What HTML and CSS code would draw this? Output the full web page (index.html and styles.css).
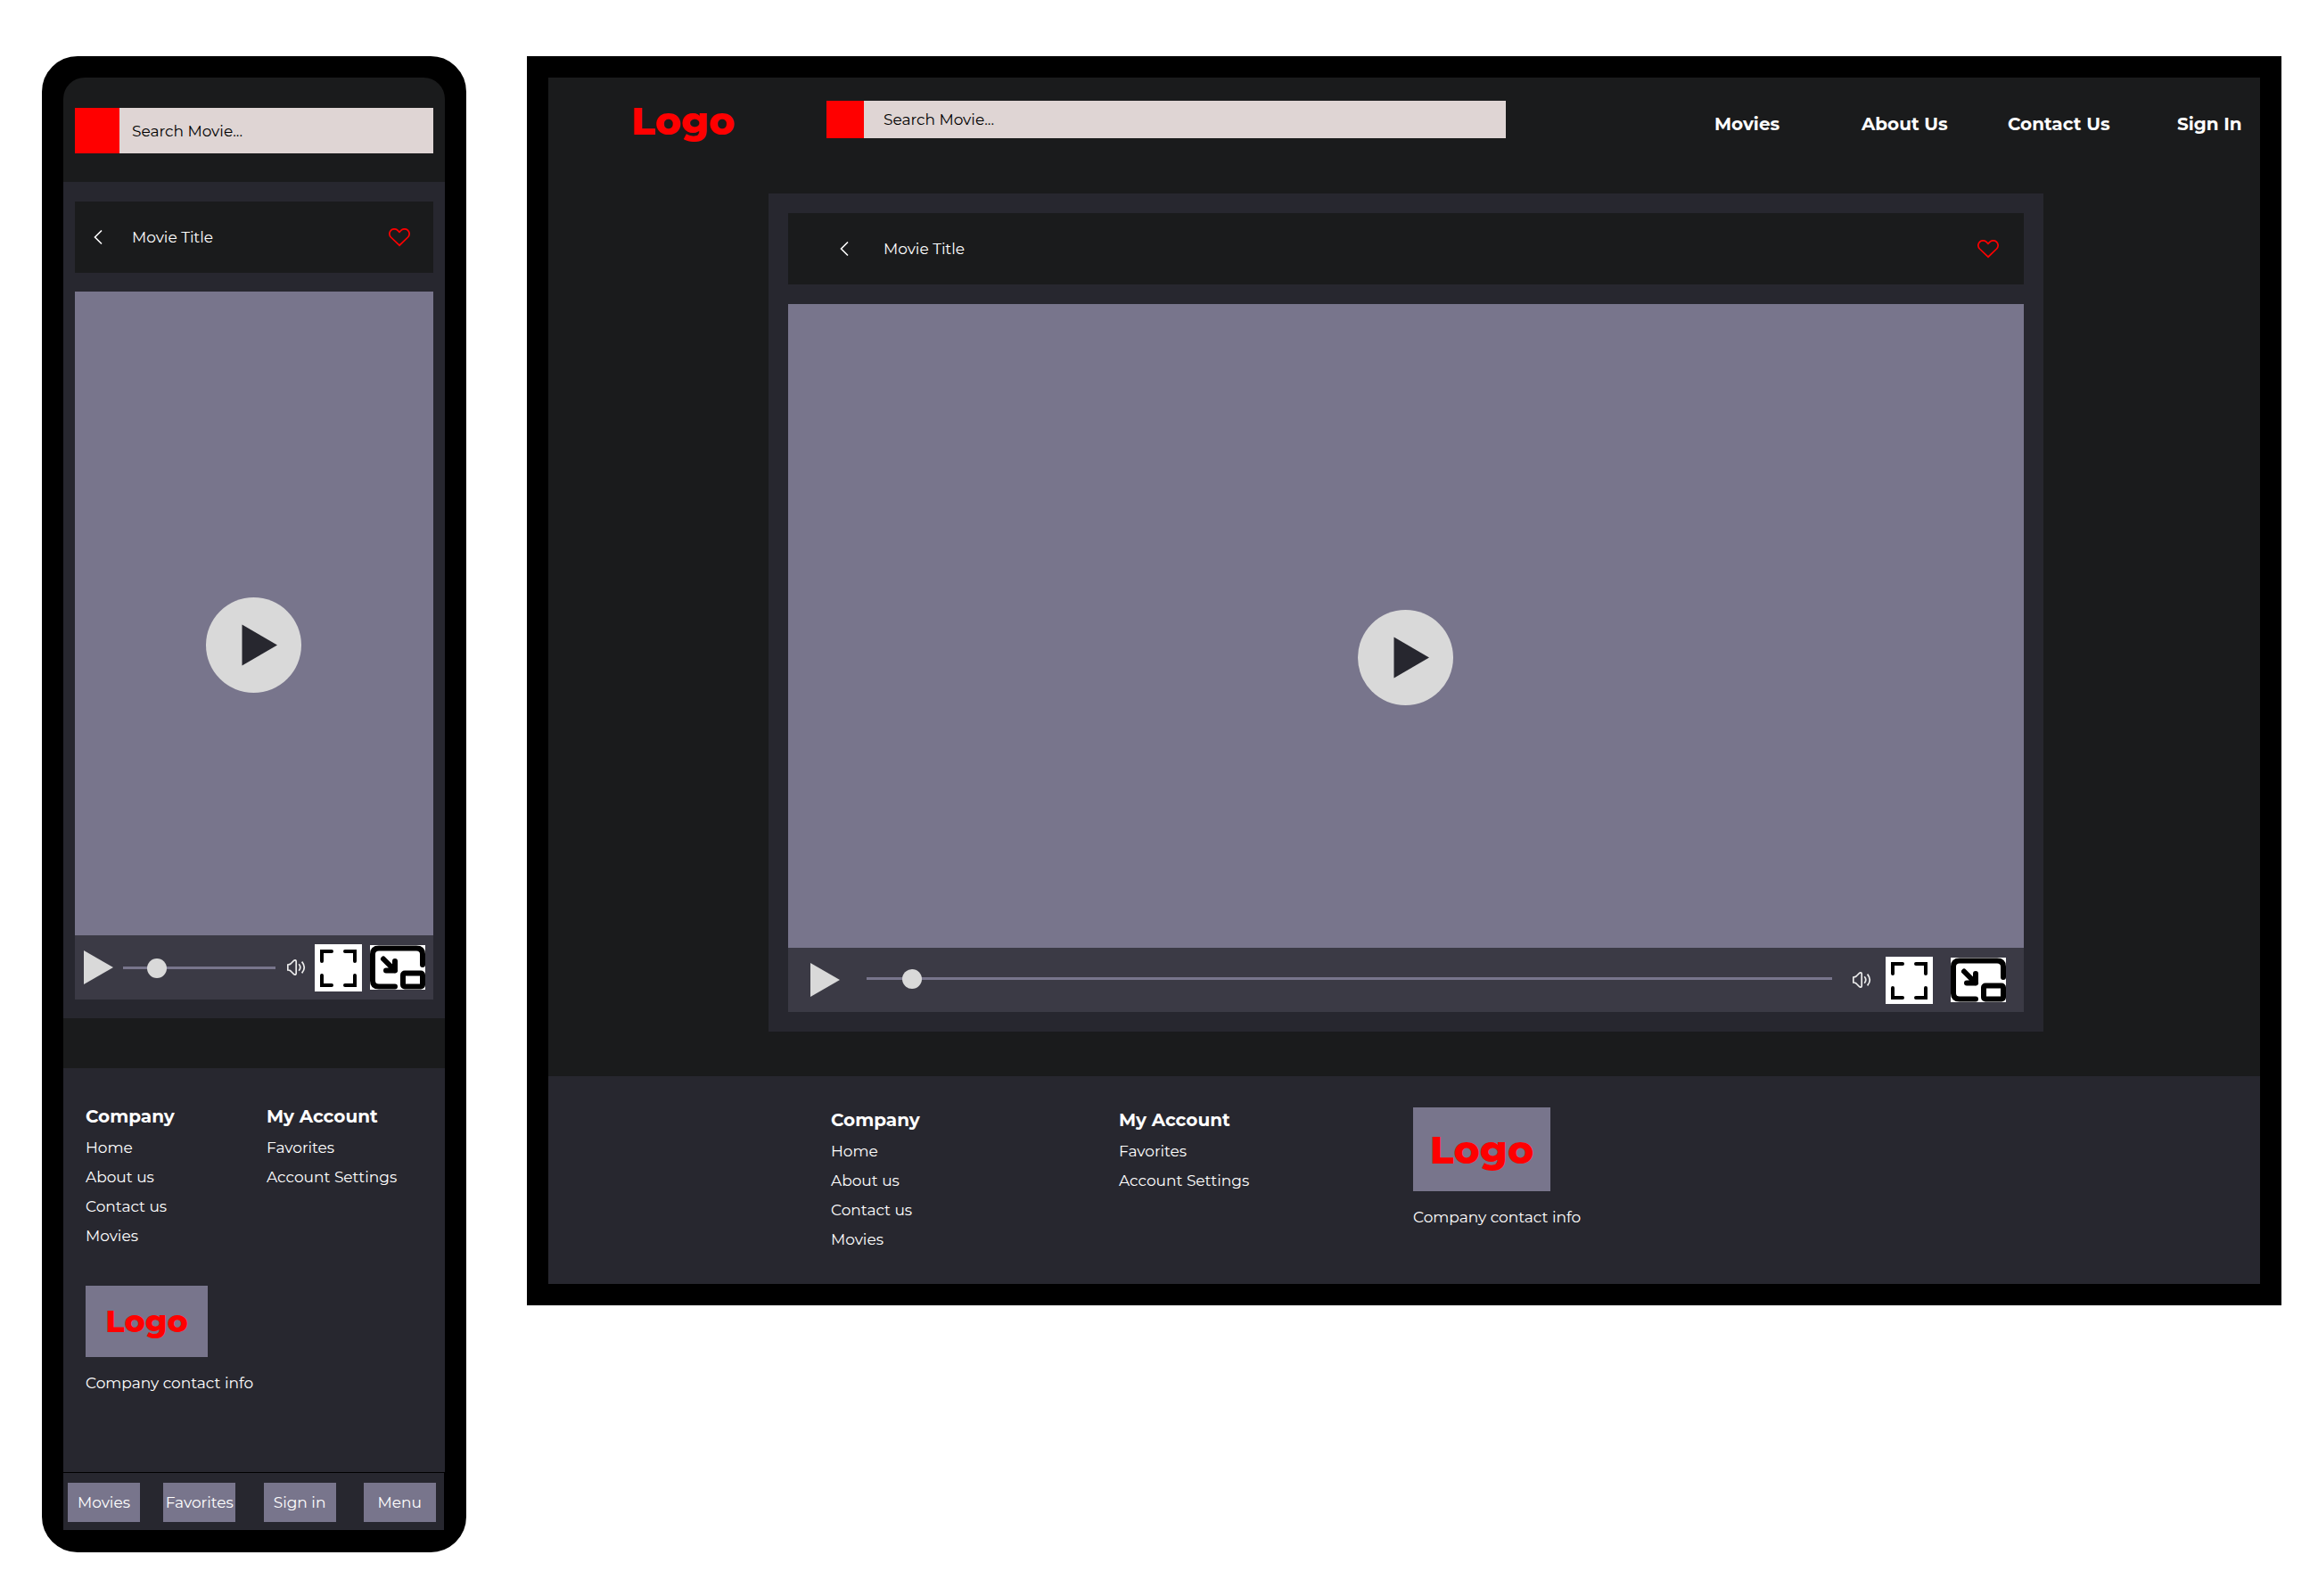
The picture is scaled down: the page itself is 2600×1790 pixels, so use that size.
FILE: index.html
```html
<!DOCTYPE html>
<html lang="en">
<head>
<meta charset="utf-8">
<meta name="viewport" content="width=device-width, initial-scale=1">
<title>Movie player</title>
<link rel="stylesheet" href="styles.css">
</head>
<body>
<svg class="sprite" aria-hidden="true">
  <symbol id="back" viewBox="0 0 10 18"><path d="M9 1.5L1.5 9 9 16.5" fill="none" stroke="currentColor" stroke-width="1.6"/></symbol>
  <symbol id="heart" viewBox="0 0 24 21"><path d="M12 19.2L2.4 10A5.3 5.3 0 0 1 10.1 2.400L12 4.3 13.9 2.400A5.3 5.3 0 0 1 21.6 10Z" fill="none" stroke="currentColor" stroke-width="1.7"/></symbol>
  <symbol id="tri" viewBox="0 0 33 38"><path d="M0 0L33 19 0 38Z" fill="currentColor"/></symbol>
  <symbol id="big-play" viewBox="0 0 107 107"><circle cx="53.5" cy="53.5" r="53.5" fill="#d9d9d9"/><path d="M40.500 30.5L80 53.5 40.500 76.5Z" fill="#27272f"/></symbol>
  <symbol id="volume" viewBox="0 0 21 18"><path d="M.8 6Q3 5.900 4 5L7.800 1.200Q10.200 0 10.200 2.500V15.500Q10.200 18 7.800 16.800L4 13Q3 12.100 .8 12Z M13.200 5.300Q16.400 9 13.200 12.700 M16.600 2.600Q22 9 16.600 15.400" fill="none" stroke="#ececec" stroke-width="1.700"/></symbol>
  <symbol id="full" viewBox="0 0 53 53"><path d="M0 0H53V53H0Z" fill="#fff"/><path d="M8 19V8H19 M34 8H45V19 M45 35V46H34 M19 46H8V35" fill="none" stroke="#000" stroke-width="4" stroke-linecap="round"/></symbol>
  <symbol id="pip" viewBox="0 0 62 50"><path d="M0 0H62V50H0Z" fill="#fff"/><g fill="none" stroke="#000" stroke-width="6" stroke-linecap="round" stroke-linejoin="round"><path d="M59 22V10Q59 3.500 52 3.500H10Q3 3.500 3 10V40Q3 46.500 10 46.500H28"/><rect x="37" y="31.500" width="22" height="15" rx="2"/><path d="M15 15.500L28 28.500M28 18V28.500H18"/></g></symbol>
</svg>

<main class="board">
  <section class="device phone" aria-label="Mobile layout">
    <header class="top">
      <form class="search" role="search">
        <button class="search-go" type="button" aria-label="Search"></button>
        <input class="search-box" type="text" aria-label="Search movie" placeholder="Search Movie...">
      </form>
    </header>
    <section class="player">
      <div class="title-bar">
        <button class="icon-btn back" type="button" aria-label="Back"><svg><use href="#back"/></svg></button>
        <h1 class="title">Movie Title</h1>
        <button class="icon-btn heart" type="button" aria-label="Add to favorites"><svg><use href="#heart"/></svg></button>
      </div>
      <div class="video">
        <button class="icon-btn big-play" type="button" aria-label="Play movie"><svg><use href="#big-play"/></svg></button>
      </div>
      <div class="controls">
        <button class="icon-btn play" type="button" aria-label="Play"><svg><use href="#tri"/></svg></button>
        <input class="seek" type="range" aria-label="Seek" min="0" max="100" value="18">
        <button class="icon-btn volume" type="button" aria-label="Volume"><svg><use href="#volume"/></svg></button>
        <button class="icon-btn full" type="button" aria-label="Full screen"><svg><use href="#full"/></svg></button>
        <button class="icon-btn pip" type="button" aria-label="Picture in picture"><svg><use href="#pip"/></svg></button>
      </div>
    </section>
    <footer class="footer">
      <nav class="links" aria-label="Company">
        <h2>Company</h2>
        <a href="#">Home</a><a href="#">About us</a><a href="#">Contact us</a><a href="#">Movies</a>
      </nav>
      <nav class="links" aria-label="My Account">
        <h2>My Account</h2>
        <a href="#">Favorites</a><a href="#">Account Settings</a>
      </nav>
      <div class="contact">
        <div class="logo-box"><span class="logo">Logo</span></div>
        <p>Company contact info</p>
      </div>
    </footer>
    <nav class="tabs" aria-label="Main">
      <button type="button">Movies</button>
      <button type="button">Favorites</button>
      <button type="button">Sign in</button>
      <button type="button">Menu</button>
    </nav>
  </section>

  <section class="device desktop" aria-label="Desktop layout">
    <header class="top">
      <a class="logo" href="#">Logo</a>
      <form class="search" role="search">
        <button class="search-go" type="button" aria-label="Search"></button>
        <input class="search-box" type="text" aria-label="Search movie" placeholder="Search Movie...">
      </form>
      <nav class="menu" aria-label="Main">
        <a href="#">Movies</a><a href="#">About Us</a><a href="#">Contact Us</a><a href="#">Sign In</a>
      </nav>
    </header>
    <section class="player">
      <div class="title-bar">
        <button class="icon-btn back" type="button" aria-label="Back"><svg><use href="#back"/></svg></button>
        <h1 class="title">Movie Title</h1>
        <button class="icon-btn heart" type="button" aria-label="Add to favorites"><svg><use href="#heart"/></svg></button>
      </div>
      <div class="video">
        <button class="icon-btn big-play" type="button" aria-label="Play movie"><svg><use href="#big-play"/></svg></button>
      </div>
      <div class="controls">
        <button class="icon-btn play" type="button" aria-label="Play"><svg><use href="#tri"/></svg></button>
        <input class="seek" type="range" aria-label="Seek" min="0" max="1000" value="38">
        <button class="icon-btn volume" type="button" aria-label="Volume"><svg><use href="#volume"/></svg></button>
        <button class="icon-btn full" type="button" aria-label="Full screen"><svg><use href="#full"/></svg></button>
        <button class="icon-btn pip" type="button" aria-label="Picture in picture"><svg><use href="#pip"/></svg></button>
      </div>
    </section>
    <footer class="footer">
      <nav class="links" aria-label="Company">
        <h2>Company</h2>
        <a href="#">Home</a><a href="#">About us</a><a href="#">Contact us</a><a href="#">Movies</a>
      </nav>
      <nav class="links" aria-label="My Account">
        <h2>My Account</h2>
        <a href="#">Favorites</a><a href="#">Account Settings</a>
      </nav>
      <div class="contact">
        <div class="logo-box"><span class="logo">Logo</span></div>
        <p>Company contact info</p>
      </div>
    </footer>
  </section>
</main>
</body>
</html>
```
FILE: styles.css
```css
:root {
  --ink: #1a1b1c;
  --panel: #27272f;
  --bar: #3b3a45;
  --mauve: #78758c;
  --light: #d9d9d9;
  --field: #dfd5d4;
  --red: #ff0000;
}

* { box-sizing: border-box; }

body {
  margin: 0;
  background: #fff;
  color: #fff;
  font: 400 17px/33px Montserrat, Inter, sans-serif;
}

h1, h2, p { margin: 0; }
a { color: inherit; text-decoration: none; }
button, input { margin: 0; padding: 0; border: 0; border-radius: 0; font: inherit; color: inherit; }
.sprite { position: absolute; width: 0; height: 0; }

.board {
  display: grid;
  grid-template-columns: minmax(0, 476fr) minmax(0, 1968fr);
  align-items: start;
  gap: 68px;
  padding: 63px 41px 49px 47px;
}

.device { border: 24px solid #000; background: var(--ink); }
.phone { border-radius: 40px; background: #000; }
.phone .top { border-radius: 24px 24px 0 0; }

/* Header */
.top { background: var(--ink); }
.phone .top { padding: 34px 13px 32px; }
.desktop .top { display: flex; align-items: flex-start; height: 130px; padding-right: 20px; }
.search { display: flex; height: 51px; }
.search-go { flex: none; width: 50px; background: var(--red); }
.search-box { flex: 1; min-width: 0; padding: 2px 0 0 14px; background: var(--field); color: #000; outline: 0; }
.search-box::placeholder { color: #000; opacity: 1; }
.desktop .search { flex: 0 1 762px; height: 42px; margin-top: 26px; }
.desktop .search-go { width: 42px; }
.desktop .search-box { padding: 0 0 0 22px; }
.logo { color: var(--red); font-weight: 800; font-size: 44px; line-height: 56px; }
.desktop .top .logo { flex: 0 0 219px; margin: 20px 0 0 93px; }
.menu {
  flex: 1;
  display: grid;
  grid-template-columns: 165fr 164fr 190fr 73fr;
  margin: 36px 0 0 234px;
  font-size: 20px;
  font-weight: 700;
  white-space: nowrap;
}

/* Player */
.player { padding: 22px 13px 21px; background: var(--panel); }
.phone .player { margin-bottom: 0; border-bottom: 56px solid var(--ink); }
.desktop .player { margin: 0 243px 0 247px; padding: 22px; }
.title-bar { display: flex; align-items: center; height: 80px; padding: 0 26px 0 21px; background: var(--ink); }
.desktop .title-bar { padding: 0 28px 0 58px; }
.title { flex: 1; font: inherit; }
.back { margin-right: 33px; }
.desktop .back { margin-right: 39px; }
.video {
  display: flex;
  align-items: center;
  justify-content: center;
  height: 722px;
  margin-top: 21px;
  padding: 71px 2px 0 0;
  background: var(--mauve);
}
.desktop .video { margin-top: 22px; }
.controls { display: flex; align-items: center; height: 72px; padding: 0 9px 0 10px; background: var(--bar); }
.desktop .controls { padding: 0 20px 0 25px; }

.icon-btn { display: block; flex: none; background: none; color: var(--light); }
.icon-btn svg { display: block; width: 100%; height: 100%; }
.back { width: 10px; height: 18px; color: #fff; }
.heart { width: 24px; height: 21px; color: var(--red); }
.big-play { width: 107px; height: 107px; }
.play { width: 33px; height: 38px; }
.volume { width: 21px; height: 18px; margin-right: 10px; }
.full { width: 53px; height: 53px; margin-right: 9px; }
.pip { width: 62px; height: 50px; }

.seek { appearance: none; flex: 1; min-width: 0; height: 22px; margin: 0 13px 0 11px; background: none; }
.seek::-webkit-slider-runnable-track { height: 3px; background: var(--mauve); }
.seek::-webkit-slider-thumb { appearance: none; width: 22px; height: 22px; margin-top: -9px; border-radius: 50%; background: var(--light); }
.desktop .seek { margin: 0 23px 3px 30px; }
.desktop .volume { margin-right: 16px; }
.desktop .full { margin-right: 20px; }

/* Footer */
.footer { display: grid; background: var(--panel); }
.links { display: flex; flex-direction: column; }
.links h2 { font-size: 20px; line-height: 37px; font-weight: 700; }
.logo-box { display: flex; align-items: center; justify-content: center; background: var(--mauve); }
.contact p { margin-top: 13px; }
.phone .footer {
  grid-template-columns: 203fr 200fr;
  align-content: start;
  row-gap: 39px;
  min-height: 453px;
  padding: 36px 0 24px 25px;
}
.phone .logo-box { width: 137px; height: 80px; }
.phone .logo-box .logo { font-size: 35px; }
.desktop .footer {
  grid-template-columns: 323fr 330fr 950fr;
  margin-top: 50px;
  padding: 31px 0 33px 317px;
}
.desktop .contact { padding-top: 4px; }
.desktop .logo-box { width: 154px; height: 94px; }

/* Bottom tab bar */
.tabs {
  display: grid;
  grid-template-columns: 107fr 112fr 112fr 81fr;
  height: 64px;
  padding: 11px 9px 9px 5px;
  margin: 1px;
  margin-left: 0;
  background: var(--panel);
}
.tabs button { width: 81px; height: 44px; background: var(--mauve); white-space: nowrap; }
```
